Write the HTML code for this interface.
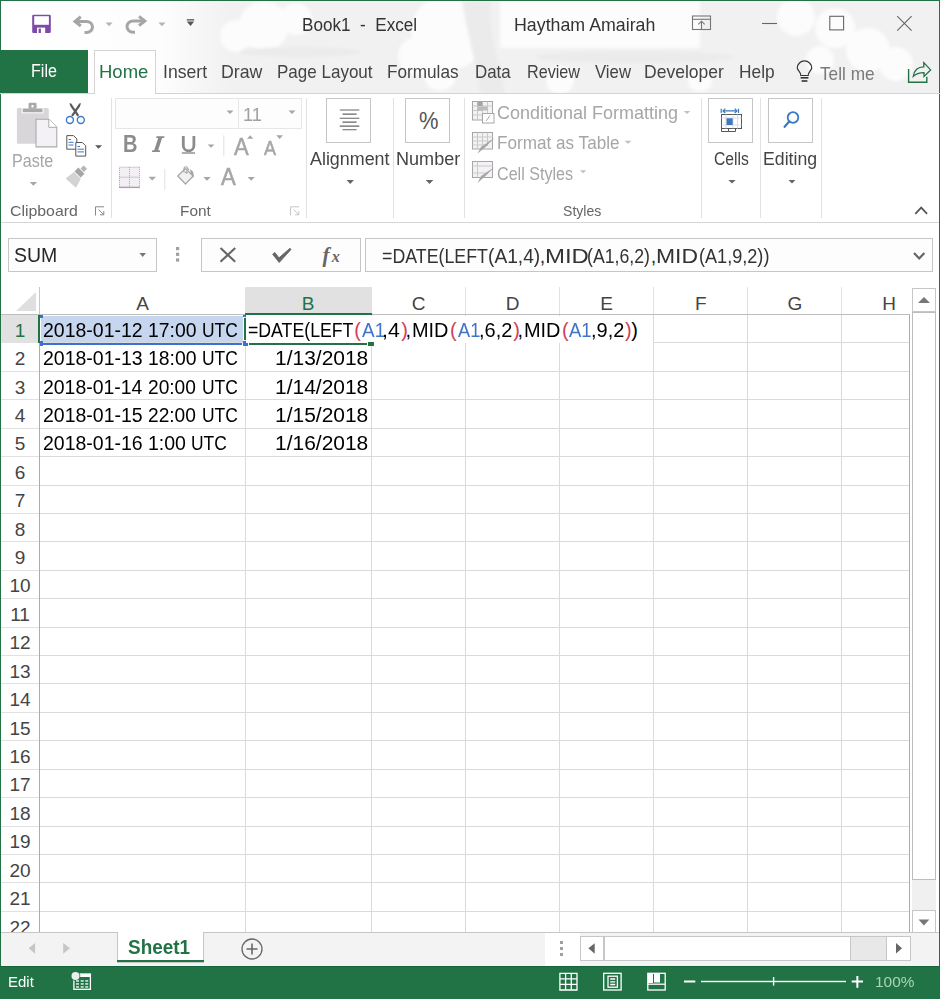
<!DOCTYPE html>
<html><head><meta charset="utf-8"><style>
html,body{margin:0;padding:0;width:940px;height:999px;overflow:hidden;background:#fff;position:relative;font-family:"Liberation Sans",sans-serif}
.t{position:absolute;white-space:pre;line-height:1;transform-origin:left top}
svg{overflow:visible}
</style></head><body>
<div style="position:absolute;left:0px;top:0px;width:940px;height:93px;background:linear-gradient(to right,#ffffff 0px,#fdfdfd 160px,#f1f1f1 230px,#f1f1f1 940px)"></div>
<svg style="position:absolute;left:0px;top:0px;" width="940" height="93" viewBox="0 0 940 93"><defs><filter id="bl" x="-20%" y="-20%" width="140%" height="140%"><feGaussianBlur stdDeviation="1.5"/></filter></defs>
<g fill="#fcfcfc" filter="url(#bl)">
<circle cx="264" cy="26" r="25"/><circle cx="296" cy="19" r="16"/><circle cx="236" cy="36" r="16"/>
<circle cx="449" cy="32" r="38"/><circle cx="417" cy="56" r="19"/><circle cx="440" cy="75" r="16"/>
<rect x="500" y="0" width="200" height="48"/><circle cx="560" cy="80" r="14"/><circle cx="700" cy="80" r="12"/>
<circle cx="796" cy="17" r="19"/><circle cx="835" cy="28" r="20"/><circle cx="868" cy="50" r="22"/><circle cx="896" cy="64" r="17"/><circle cx="820" cy="60" r="14"/>
</g>
<g fill="#ebebeb" filter="url(#bl)">
<ellipse cx="300" cy="52" rx="60" ry="5"/><path d="M462 0 H492 C486 30 500 60 505 93 H480 C476 60 466 30 462 0 Z"/>
<ellipse cx="635" cy="57" rx="100" ry="6"/>
</g></svg>
<div style="position:absolute;left:0px;top:0px;width:940px;height:1px;background:#217346"></div>
<div style="position:absolute;left:0px;top:0px;width:1px;height:999px;background:#217346"></div>
<div style="position:absolute;left:939px;top:0px;width:1px;height:999px;background:#217346"></div>
<div class="t" style="left:301.96px;top:16.00px;font-size:18.02px;color:#333;font-weight:normal;transform:scaleX(0.9496);">Book1  -  Excel</div>
<div class="t" style="left:513.97px;top:16.00px;font-size:18.02px;color:#333;font-weight:normal;transform:scaleX(0.9875);">Haytham Amairah</div>
<div style="position:absolute;left:0px;top:50px;width:88px;height:43px;background:#217346"></div>
<div class="t" style="left:30.87px;top:62.00px;font-size:18.02px;color:#fff;font-weight:normal;transform:scaleX(0.8954);">File</div>
<div style="position:absolute;left:94px;top:50px;width:62px;height:44px;background:#fff;border:1px solid #d4d4d4;border-bottom:none;box-sizing:border-box"></div>
<div style="position:absolute;left:0px;top:93px;width:940px;height:1px;background:#d4d4d4"></div>
<div style="position:absolute;left:95px;top:93px;width:60px;height:1px;background:#fff"></div>
<div class="t" style="left:99.40px;top:63.00px;font-size:18.60px;color:#217346;font-weight:normal;transform:scaleX(0.9945);">Home</div>
<div class="t" style="left:162.95px;top:63.00px;font-size:18.60px;color:#444;font-weight:normal;transform:scaleX(0.9468);">Insert</div>
<div class="t" style="left:220.68px;top:63.00px;font-size:18.60px;color:#444;font-weight:normal;transform:scaleX(0.9551);">Draw</div>
<div class="t" style="left:277.39px;top:63.00px;font-size:18.60px;color:#444;font-weight:normal;transform:scaleX(0.9152);">Page Layout</div>
<div class="t" style="left:387.25px;top:63.00px;font-size:18.60px;color:#444;font-weight:normal;transform:scaleX(0.9234);">Formulas</div>
<div class="t" style="left:474.85px;top:63.00px;font-size:18.60px;color:#444;font-weight:normal;transform:scaleX(0.9093);">Data</div>
<div class="t" style="left:526.86px;top:63.00px;font-size:18.60px;color:#444;font-weight:normal;transform:scaleX(0.8702);">Review</div>
<div class="t" style="left:594.50px;top:63.00px;font-size:18.60px;color:#444;font-weight:normal;transform:scaleX(0.9004);">View</div>
<div class="t" style="left:644.43px;top:63.00px;font-size:18.60px;color:#444;font-weight:normal;transform:scaleX(0.9420);">Developer</div>
<div class="t" style="left:738.64px;top:63.00px;font-size:18.60px;color:#444;font-weight:normal;transform:scaleX(0.9309);">Help</div>
<div class="t" style="left:820.40px;top:65.00px;font-size:18.60px;color:#7a7a7a;font-weight:normal;transform:scaleX(0.9266);">Tell me</div>
<div style="position:absolute;left:1px;top:94px;width:938px;height:128px;background:#fff"></div>
<div style="position:absolute;left:1px;top:222px;width:938px;height:1px;background:#d6d6d6"></div>
<div style="position:absolute;left:111px;top:98px;width:1px;height:120px;background:#e1e1e1"></div>
<div style="position:absolute;left:306px;top:98px;width:1px;height:120px;background:#e1e1e1"></div>
<div style="position:absolute;left:393px;top:98px;width:1px;height:120px;background:#e1e1e1"></div>
<div style="position:absolute;left:464px;top:98px;width:1px;height:120px;background:#e1e1e1"></div>
<div style="position:absolute;left:701px;top:98px;width:1px;height:120px;background:#e1e1e1"></div>
<div style="position:absolute;left:760px;top:98px;width:1px;height:120px;background:#e1e1e1"></div>
<div style="position:absolute;left:821px;top:98px;width:1px;height:120px;background:#e1e1e1"></div>
<div class="t" style="left:12.35px;top:153.00px;font-size:17.44px;color:#a6a6a6;font-weight:normal;transform:scaleX(0.9247);">Paste</div>
<div class="t" style="left:10.48px;top:204.00px;font-size:14.97px;color:#666;font-weight:normal;transform:scaleX(1.0581);">Clipboard</div>
<div class="t" style="left:179.92px;top:204.00px;font-size:14.97px;color:#666;font-weight:normal;transform:scaleX(1.0283);">Font</div>
<div class="t" style="left:310.00px;top:150.00px;font-size:18.75px;color:#444;font-weight:normal;transform:scaleX(0.9535);">Alignment</div>
<div class="t" style="left:396.35px;top:150.00px;font-size:18.75px;color:#444;font-weight:normal;transform:scaleX(0.9633);">Number</div>
<div class="t" style="left:496.84px;top:104.00px;font-size:18.31px;color:#a6a6a6;font-weight:normal;transform:scaleX(0.9833);">Conditional Formatting</div>
<div class="t" style="left:496.69px;top:134.00px;font-size:18.02px;color:#a6a6a6;font-weight:normal;transform:scaleX(0.9511);">Format as Table</div>
<div class="t" style="left:497.09px;top:165.00px;font-size:18.02px;color:#a6a6a6;font-weight:normal;transform:scaleX(0.8947);">Cell Styles</div>
<div class="t" style="left:562.87px;top:204.00px;font-size:14.97px;color:#666;font-weight:normal;transform:scaleX(0.9417);">Styles</div>
<div class="t" style="left:713.95px;top:150.00px;font-size:18.75px;color:#444;font-weight:normal;transform:scaleX(0.8361);">Cells</div>
<div class="t" style="left:763.27px;top:150.00px;font-size:18.75px;color:#444;font-weight:normal;transform:scaleX(0.9438);">Editing</div>
<div style="position:absolute;left:115px;top:98px;width:124px;height:31px;border:1px solid #e6e6e6;box-sizing:border-box;background:#fdfdfd"></div>
<div style="position:absolute;left:238px;top:98px;width:64px;height:31px;border:1px solid #e6e6e6;box-sizing:border-box;background:#fdfdfd"></div>
<div class="t" style="left:243.36px;top:106.00px;font-size:18.17px;color:#a0a0a0;font-weight:normal;transform:scaleX(1.0068);">11</div>
<div style="position:absolute;left:326px;top:98px;width:45px;height:45px;border:1px solid #c6c6c6;box-sizing:border-box"></div>
<div style="position:absolute;left:405px;top:98px;width:45px;height:45px;border:1px solid #c6c6c6;box-sizing:border-box"></div>
<div style="position:absolute;left:708px;top:98px;width:45px;height:45px;border:1px solid #c6c6c6;box-sizing:border-box"></div>
<div style="position:absolute;left:768px;top:98px;width:45px;height:45px;border:1px solid #c6c6c6;box-sizing:border-box"></div>
<div style="position:absolute;left:8px;top:238px;width:149px;height:34px;border:1px solid #c6c6c6;box-sizing:border-box;background:#fdfdfd"></div>
<div class="t" style="left:14.20px;top:246.00px;font-size:19.77px;color:#262626;font-weight:normal;transform:scaleX(0.9844);">SUM</div>
<div style="position:absolute;left:201px;top:238px;width:160px;height:34px;border:1px solid #c6c6c6;box-sizing:border-box;background:#fdfdfd"></div>
<div style="position:absolute;left:365px;top:238px;width:568px;height:34px;border:1px solid #c6c6c6;box-sizing:border-box;background:#fdfdfd"></div>
<div class="t" style="left:381.89px;top:247.00px;font-size:19.77px;color:#333;font-weight:normal;transform:scaleX(0.8997);">=DATE(LEFT</div>
<div class="t" style="left:487.70px;top:247.00px;font-size:19.77px;color:#333;font-weight:normal;transform:scaleX(0.9708);">(A1,4)</div>
<div class="t" style="left:539.85px;top:247.00px;font-size:19.77px;color:#333;font-weight:normal;transform:scaleX(1.0000);">,</div>
<div class="t" style="left:544.81px;top:247.00px;font-size:19.77px;color:#333;font-weight:normal;transform:scaleX(1.2114);">MID</div>
<div class="t" style="left:587.36px;top:247.00px;font-size:19.77px;color:#333;font-weight:normal;transform:scaleX(0.8956);">(A1,6,2)</div>
<div class="t" style="left:650.75px;top:247.00px;font-size:19.77px;color:#333;font-weight:normal;transform:scaleX(1.0000);">,</div>
<div class="t" style="left:656.30px;top:247.00px;font-size:19.77px;color:#333;font-weight:normal;transform:scaleX(1.1604);">MID</div>
<div class="t" style="left:698.88px;top:247.00px;font-size:19.77px;color:#333;font-weight:normal;transform:scaleX(0.9157);">(A1,9,2))</div>
<div style="position:absolute;left:1px;top:287px;width:909px;height:645.5px;background:#fff"></div>
<div style="position:absolute;left:40px;top:342.42px;width:870px;height:1px;background:#dadada"></div>
<div style="position:absolute;left:1px;top:342.42px;width:39px;height:1px;background:#e1e1e1"></div>
<div style="position:absolute;left:40px;top:370.84px;width:870px;height:1px;background:#dadada"></div>
<div style="position:absolute;left:1px;top:370.84px;width:39px;height:1px;background:#e1e1e1"></div>
<div style="position:absolute;left:40px;top:399.26px;width:870px;height:1px;background:#dadada"></div>
<div style="position:absolute;left:1px;top:399.26px;width:39px;height:1px;background:#e1e1e1"></div>
<div style="position:absolute;left:40px;top:427.68px;width:870px;height:1px;background:#dadada"></div>
<div style="position:absolute;left:1px;top:427.68px;width:39px;height:1px;background:#e1e1e1"></div>
<div style="position:absolute;left:40px;top:456.10px;width:870px;height:1px;background:#dadada"></div>
<div style="position:absolute;left:1px;top:456.10px;width:39px;height:1px;background:#e1e1e1"></div>
<div style="position:absolute;left:40px;top:484.52px;width:870px;height:1px;background:#dadada"></div>
<div style="position:absolute;left:1px;top:484.52px;width:39px;height:1px;background:#e1e1e1"></div>
<div style="position:absolute;left:40px;top:512.94px;width:870px;height:1px;background:#dadada"></div>
<div style="position:absolute;left:1px;top:512.94px;width:39px;height:1px;background:#e1e1e1"></div>
<div style="position:absolute;left:40px;top:541.36px;width:870px;height:1px;background:#dadada"></div>
<div style="position:absolute;left:1px;top:541.36px;width:39px;height:1px;background:#e1e1e1"></div>
<div style="position:absolute;left:40px;top:569.78px;width:870px;height:1px;background:#dadada"></div>
<div style="position:absolute;left:1px;top:569.78px;width:39px;height:1px;background:#e1e1e1"></div>
<div style="position:absolute;left:40px;top:598.20px;width:870px;height:1px;background:#dadada"></div>
<div style="position:absolute;left:1px;top:598.20px;width:39px;height:1px;background:#e1e1e1"></div>
<div style="position:absolute;left:40px;top:626.62px;width:870px;height:1px;background:#dadada"></div>
<div style="position:absolute;left:1px;top:626.62px;width:39px;height:1px;background:#e1e1e1"></div>
<div style="position:absolute;left:40px;top:655.04px;width:870px;height:1px;background:#dadada"></div>
<div style="position:absolute;left:1px;top:655.04px;width:39px;height:1px;background:#e1e1e1"></div>
<div style="position:absolute;left:40px;top:683.46px;width:870px;height:1px;background:#dadada"></div>
<div style="position:absolute;left:1px;top:683.46px;width:39px;height:1px;background:#e1e1e1"></div>
<div style="position:absolute;left:40px;top:711.88px;width:870px;height:1px;background:#dadada"></div>
<div style="position:absolute;left:1px;top:711.88px;width:39px;height:1px;background:#e1e1e1"></div>
<div style="position:absolute;left:40px;top:740.30px;width:870px;height:1px;background:#dadada"></div>
<div style="position:absolute;left:1px;top:740.30px;width:39px;height:1px;background:#e1e1e1"></div>
<div style="position:absolute;left:40px;top:768.72px;width:870px;height:1px;background:#dadada"></div>
<div style="position:absolute;left:1px;top:768.72px;width:39px;height:1px;background:#e1e1e1"></div>
<div style="position:absolute;left:40px;top:797.14px;width:870px;height:1px;background:#dadada"></div>
<div style="position:absolute;left:1px;top:797.14px;width:39px;height:1px;background:#e1e1e1"></div>
<div style="position:absolute;left:40px;top:825.56px;width:870px;height:1px;background:#dadada"></div>
<div style="position:absolute;left:1px;top:825.56px;width:39px;height:1px;background:#e1e1e1"></div>
<div style="position:absolute;left:40px;top:853.98px;width:870px;height:1px;background:#dadada"></div>
<div style="position:absolute;left:1px;top:853.98px;width:39px;height:1px;background:#e1e1e1"></div>
<div style="position:absolute;left:40px;top:882.40px;width:870px;height:1px;background:#dadada"></div>
<div style="position:absolute;left:1px;top:882.40px;width:39px;height:1px;background:#e1e1e1"></div>
<div style="position:absolute;left:40px;top:910.82px;width:870px;height:1px;background:#dadada"></div>
<div style="position:absolute;left:1px;top:910.82px;width:39px;height:1px;background:#e1e1e1"></div>
<div style="position:absolute;left:40px;top:939.24px;width:870px;height:1px;background:#dadada"></div>
<div style="position:absolute;left:1px;top:939.24px;width:39px;height:1px;background:#e1e1e1"></div>
<div style="position:absolute;left:244.50px;top:314.5px;width:1px;height:618.0px;background:#dadada"></div>
<div style="position:absolute;left:244.50px;top:287px;width:1px;height:28px;background:#e1e1e1"></div>
<div style="position:absolute;left:371.00px;top:314.5px;width:1px;height:618.0px;background:#dadada"></div>
<div style="position:absolute;left:371.00px;top:287px;width:1px;height:28px;background:#e1e1e1"></div>
<div style="position:absolute;left:465.00px;top:314.5px;width:1px;height:618.0px;background:#dadada"></div>
<div style="position:absolute;left:465.00px;top:287px;width:1px;height:28px;background:#e1e1e1"></div>
<div style="position:absolute;left:559.00px;top:314.5px;width:1px;height:618.0px;background:#dadada"></div>
<div style="position:absolute;left:559.00px;top:287px;width:1px;height:28px;background:#e1e1e1"></div>
<div style="position:absolute;left:653.20px;top:314.5px;width:1px;height:618.0px;background:#dadada"></div>
<div style="position:absolute;left:653.20px;top:287px;width:1px;height:28px;background:#e1e1e1"></div>
<div style="position:absolute;left:747.30px;top:314.5px;width:1px;height:618.0px;background:#dadada"></div>
<div style="position:absolute;left:747.30px;top:287px;width:1px;height:28px;background:#e1e1e1"></div>
<div style="position:absolute;left:841.40px;top:314.5px;width:1px;height:618.0px;background:#dadada"></div>
<div style="position:absolute;left:841.40px;top:287px;width:1px;height:28px;background:#e1e1e1"></div>
<div style="position:absolute;left:909.50px;top:314.5px;width:1px;height:618.0px;background:#dadada"></div>
<div style="position:absolute;left:909.50px;top:287px;width:1px;height:28px;background:#e1e1e1"></div>
<div style="position:absolute;left:1px;top:314px;width:909px;height:1px;background:#bdbdbd"></div>
<div style="position:absolute;left:39px;top:287px;width:1px;height:27px;background:#c8c8c8"></div>
<div style="position:absolute;left:39px;top:314px;width:1px;height:618.5px;background:#ababab"></div>
<div style="position:absolute;left:245px;top:287px;width:126.5px;height:27.5px;background:#e1e1e1"></div>
<div style="position:absolute;left:245px;top:313px;width:126.5px;height:2px;background:#217346"></div>
<div style="position:absolute;left:1px;top:315px;width:38px;height:28.4px;background:#e1e1e1"></div>
<div style="position:absolute;left:38px;top:315px;width:2px;height:28.4px;background:#217346"></div>
<svg style="position:absolute;left:16px;top:292px;" width="21" height="20" viewBox="0 0 21 20"><polygon points="20,0 20,19 0,19" fill="#dfdfdf"/></svg>
<div class="t" style="left:122.5px;width:40px;text-align:center;top:294px;font-size:19px;color:#444">A</div>
<div class="t" style="left:288.2px;width:40px;text-align:center;top:294px;font-size:19px;color:#217346">B</div>
<div class="t" style="left:398.5px;width:40px;text-align:center;top:294px;font-size:19px;color:#444">C</div>
<div class="t" style="left:492.5px;width:40px;text-align:center;top:294px;font-size:19px;color:#444">D</div>
<div class="t" style="left:586.6px;width:40px;text-align:center;top:294px;font-size:19px;color:#444">E</div>
<div class="t" style="left:680.8px;width:40px;text-align:center;top:294px;font-size:19px;color:#444">F</div>
<div class="t" style="left:774.8px;width:40px;text-align:center;top:294px;font-size:19px;color:#444">G</div>
<div class="t" style="left:869.0px;width:40px;text-align:center;top:294px;font-size:19px;color:#444">H</div>
<div class="t" style="left:1px;width:38px;text-align:center;top:321px;font-size:19px;color:#217346">1</div>
<div class="t" style="left:1px;width:38px;text-align:center;top:349px;font-size:19px;color:#444">2</div>
<div class="t" style="left:1px;width:38px;text-align:center;top:378px;font-size:19px;color:#444">3</div>
<div class="t" style="left:1px;width:38px;text-align:center;top:406px;font-size:19px;color:#444">4</div>
<div class="t" style="left:1px;width:38px;text-align:center;top:434px;font-size:19px;color:#444">5</div>
<div class="t" style="left:1px;width:38px;text-align:center;top:463px;font-size:19px;color:#444">6</div>
<div class="t" style="left:1px;width:38px;text-align:center;top:491px;font-size:19px;color:#444">7</div>
<div class="t" style="left:1px;width:38px;text-align:center;top:520px;font-size:19px;color:#444">8</div>
<div class="t" style="left:1px;width:38px;text-align:center;top:548px;font-size:19px;color:#444">9</div>
<div class="t" style="left:1px;width:38px;text-align:center;top:576px;font-size:19px;color:#444">10</div>
<div class="t" style="left:1px;width:38px;text-align:center;top:605px;font-size:19px;color:#444">11</div>
<div class="t" style="left:1px;width:38px;text-align:center;top:633px;font-size:19px;color:#444">12</div>
<div class="t" style="left:1px;width:38px;text-align:center;top:662px;font-size:19px;color:#444">13</div>
<div class="t" style="left:1px;width:38px;text-align:center;top:690px;font-size:19px;color:#444">14</div>
<div class="t" style="left:1px;width:38px;text-align:center;top:719px;font-size:19px;color:#444">15</div>
<div class="t" style="left:1px;width:38px;text-align:center;top:747px;font-size:19px;color:#444">16</div>
<div class="t" style="left:1px;width:38px;text-align:center;top:775px;font-size:19px;color:#444">17</div>
<div class="t" style="left:1px;width:38px;text-align:center;top:804px;font-size:19px;color:#444">18</div>
<div class="t" style="left:1px;width:38px;text-align:center;top:832px;font-size:19px;color:#444">19</div>
<div class="t" style="left:1px;width:38px;text-align:center;top:861px;font-size:19px;color:#444">20</div>
<div class="t" style="left:1px;width:38px;text-align:center;top:889px;font-size:19px;color:#444">21</div>
<div class="t" style="left:1px;width:38px;text-align:center;top:918px;font-size:19px;color:#444">22</div>
<div style="position:absolute;left:41px;top:316px;width:202px;height:26px;background:#c6d6ee"></div>
<div style="position:absolute;left:42px;top:343px;width:200px;height:2px;background:#3a72d2"></div>
<div style="position:absolute;left:40px;top:315px;width:3px;height:3px;background:#3a72d2"></div>
<div style="position:absolute;left:243px;top:315px;width:3px;height:2px;background:#3a72d2"></div>
<div style="position:absolute;left:40px;top:341px;width:3px;height:5px;background:#3a72d2"></div>
<div style="position:absolute;left:243px;top:341px;width:5px;height:5px;background:#3a72d2"></div>
<div class="t" style="left:42.68px;top:321.00px;font-size:19.91px;color:#000;font-weight:normal;transform:scaleX(0.9788);">2018-01-12</div>
<div class="t" style="left:148.10px;top:321.00px;font-size:19.91px;color:#000;font-weight:normal;transform:scaleX(0.9724);">17:00</div>
<div class="t" style="left:201.74px;top:321.00px;font-size:19.91px;color:#000;font-weight:normal;transform:scaleX(0.8764);">UTC</div>
<div class="t" style="left:42.68px;top:349.00px;font-size:19.91px;color:#000;font-weight:normal;transform:scaleX(0.9787);">2018-01-13</div>
<div class="t" style="left:148.10px;top:349.00px;font-size:19.91px;color:#000;font-weight:normal;transform:scaleX(0.9724);">18:00</div>
<div class="t" style="left:201.74px;top:349.00px;font-size:19.91px;color:#000;font-weight:normal;transform:scaleX(0.8764);">UTC</div>
<div class="t" style="left:42.68px;top:378.00px;font-size:19.91px;color:#000;font-weight:normal;transform:scaleX(0.9762);">2018-01-14</div>
<div class="t" style="left:147.87px;top:378.00px;font-size:19.91px;color:#000;font-weight:normal;transform:scaleX(0.9617);">20:00</div>
<div class="t" style="left:201.74px;top:378.00px;font-size:19.91px;color:#000;font-weight:normal;transform:scaleX(0.8764);">UTC</div>
<div class="t" style="left:42.68px;top:406.00px;font-size:19.91px;color:#000;font-weight:normal;transform:scaleX(0.9787);">2018-01-15</div>
<div class="t" style="left:147.87px;top:406.00px;font-size:19.91px;color:#000;font-weight:normal;transform:scaleX(0.9617);">22:00</div>
<div class="t" style="left:201.74px;top:406.00px;font-size:19.91px;color:#000;font-weight:normal;transform:scaleX(0.8764);">UTC</div>
<div class="t" style="left:42.68px;top:434.00px;font-size:19.91px;color:#000;font-weight:normal;transform:scaleX(0.9787);">2018-01-16</div>
<div class="t" style="left:148.09px;top:434.00px;font-size:19.91px;color:#000;font-weight:normal;transform:scaleX(0.9800);">1:00</div>
<div class="t" style="left:191.21px;top:434.00px;font-size:19.91px;color:#000;font-weight:normal;transform:scaleX(0.8750);">UTC</div>
<div class="t" style="left:275.45px;top:349.00px;font-size:19.91px;color:#000;font-weight:normal;transform:scaleX(1.0532);">1/13/2018</div>
<div class="t" style="left:275.45px;top:378.00px;font-size:19.91px;color:#000;font-weight:normal;transform:scaleX(1.0532);">1/14/2018</div>
<div class="t" style="left:275.45px;top:406.00px;font-size:19.91px;color:#000;font-weight:normal;transform:scaleX(1.0532);">1/15/2018</div>
<div class="t" style="left:275.45px;top:434.00px;font-size:19.91px;color:#000;font-weight:normal;transform:scaleX(1.0532);">1/16/2018</div>
<div style="position:absolute;left:246px;top:315.5px;width:407px;height:27.5px;background:#fff"></div>
<div style="position:absolute;left:244px;top:318px;width:2px;height:22px;background:#217346"></div>
<div style="position:absolute;left:249px;top:343px;width:118px;height:2px;background:#217346"></div>
<div style="position:absolute;left:368px;top:342px;width:6px;height:4px;background:#217346"></div>
<div class="t" style="left:248.40px;top:321.00px;font-size:19.91px;color:#000;font-weight:normal;transform:scaleX(0.8894);">=DATE(LEFT</div>
<div class="t" style="left:354.30px;top:321.00px;font-size:19.91px;color:#d0415a;font-weight:normal;transform:scaleX(1.0000);">(</div>
<div class="t" style="left:361.79px;top:321.00px;font-size:19.91px;color:#3f74c9;font-weight:normal;transform:scaleX(0.9519);">A1</div>
<div class="t" style="left:382.34px;top:321.00px;font-size:19.91px;color:#000;font-weight:normal;transform:scaleX(1.0703);">,4</div>
<div class="t" style="left:401.25px;top:321.00px;font-size:19.91px;color:#d0415a;font-weight:normal;transform:scaleX(1.0000);">)</div>
<div class="t" style="left:405.40px;top:321.00px;font-size:19.91px;color:#000;font-weight:normal;transform:scaleX(1.0000);">,</div>
<div class="t" style="left:411.82px;top:321.00px;font-size:19.91px;color:#000;font-weight:normal;transform:scaleX(1.0005);">MID</div>
<div class="t" style="left:450.10px;top:321.00px;font-size:19.91px;color:#d0415a;font-weight:normal;transform:scaleX(1.0000);">(</div>
<div class="t" style="left:458.00px;top:321.00px;font-size:19.91px;color:#3f74c9;font-weight:normal;transform:scaleX(0.9147);">A1</div>
<div class="t" style="left:478.59px;top:321.00px;font-size:19.91px;color:#000;font-weight:normal;transform:scaleX(1.0036);">,6,2</div>
<div class="t" style="left:513.20px;top:321.00px;font-size:19.91px;color:#d0415a;font-weight:normal;transform:scaleX(1.0000);">)</div>
<div class="t" style="left:517.40px;top:321.00px;font-size:19.91px;color:#000;font-weight:normal;transform:scaleX(1.0000);">,</div>
<div class="t" style="left:523.82px;top:321.00px;font-size:19.91px;color:#000;font-weight:normal;transform:scaleX(1.0005);">MID</div>
<div class="t" style="left:562.10px;top:321.00px;font-size:19.91px;color:#d0415a;font-weight:normal;transform:scaleX(1.0000);">(</div>
<div class="t" style="left:569.21px;top:321.00px;font-size:19.91px;color:#3f74c9;font-weight:normal;transform:scaleX(0.9314);">A1</div>
<div class="t" style="left:590.66px;top:321.00px;font-size:19.91px;color:#000;font-weight:normal;transform:scaleX(1.0036);">,9,2</div>
<div class="t" style="left:625.10px;top:321.00px;font-size:19.91px;color:#d0415a;font-weight:normal;transform:scaleX(1.0000);">)</div>
<div class="t" style="left:631.20px;top:321.00px;font-size:19.91px;color:#000;font-weight:normal;transform:scaleX(1.0000);">)</div>
<div style="position:absolute;left:910px;top:287px;width:29px;height:646px;background:#fff"></div>
<div style="position:absolute;left:912px;top:288px;width:24px;height:24px;border:1px solid #c6c6c6;box-sizing:border-box;background:#fff"></div>
<div style="position:absolute;left:912px;top:312px;width:24px;height:598px;background:#f0f0f0"></div>
<div style="position:absolute;left:912px;top:312px;width:24px;height:568px;background:#fff;border:1px solid #bdbdbd;box-sizing:border-box"></div>
<div style="position:absolute;left:912px;top:910px;width:24px;height:24px;border:1px solid #c6c6c6;box-sizing:border-box;background:#fff"></div>
<svg style="position:absolute;left:912px;top:288px;" width="24" height="24" viewBox="0 0 24 24"><polygon points="6,15 18,15 12,9" fill="#777"/></svg>
<svg style="position:absolute;left:912px;top:910px;" width="24" height="24" viewBox="0 0 24 24"><polygon points="6.5,9.5 17.3,9.5 11.9,15.5" fill="#777"/></svg>
<div style="position:absolute;left:909px;top:315px;width:1px;height:617px;background:#ababab"></div>
<div style="position:absolute;left:1px;top:932px;width:938px;height:34px;background:#f3f3f3"></div>
<div style="position:absolute;left:1px;top:932px;width:938px;height:1px;background:#c6c6c6"></div>
<div style="position:absolute;left:545px;top:933px;width:35px;height:33px;background:#fff"></div>
<div style="position:absolute;left:117px;top:932px;width:87px;height:31px;background:#fff;border:1px solid #c6c6c6;border-top:none;box-sizing:border-box"></div>
<div style="position:absolute;left:117px;top:960px;width:87px;height:2px;background:#217346"></div>
<div class="t" style="left:127.79px;top:938.00px;font-size:19.62px;color:#217346;font-weight:bold;transform:scaleX(0.9654);">Sheet1</div>
<svg style="position:absolute;left:0px;top:930px;" width="100" height="30" viewBox="0 0 100 30"><polygon points="28.7,18.3 35.1,12.9 35.1,23.7" fill="#c6c6c6"/><polygon points="63.2,12.9 70,18.3 63.2,23.7" fill="#c6c6c6"/></svg>
<svg style="position:absolute;left:240px;top:937px;" width="24" height="24" viewBox="0 0 24 24"><circle cx="12" cy="12" r="10" fill="none" stroke="#666" stroke-width="1.3"/><path d="M12 6.5v11M6.5 12h11" stroke="#666" stroke-width="1.6"/></svg>
<svg style="position:absolute;left:558px;top:940px;" width="8" height="18" viewBox="0 0 8 18"><rect x="2" y="1" width="3" height="3" fill="#a0a0a0"/><rect x="2" y="7" width="3" height="3" fill="#a0a0a0"/><rect x="2" y="13" width="3" height="3" fill="#a0a0a0"/></svg>
<div style="position:absolute;left:580px;top:936px;width:331px;height:25px;border:1px solid #c6c6c6;box-sizing:border-box;background:#e8e8e8"></div>
<div style="position:absolute;left:580px;top:936px;width:24px;height:25px;border:1px solid #c6c6c6;box-sizing:border-box;background:#fff"></div>
<div style="position:absolute;left:604px;top:936px;width:247px;height:25px;border:1px solid #c6c6c6;box-sizing:border-box;background:#fff"></div>
<div style="position:absolute;left:886px;top:936px;width:25px;height:25px;border:1px solid #c6c6c6;box-sizing:border-box;background:#fff"></div>
<svg style="position:absolute;left:580px;top:936px;" width="24" height="25" viewBox="0 0 24 25"><polygon points="8.4,12.3 14.7,7.3 14.7,17.7" fill="#666"/></svg>
<svg style="position:absolute;left:886px;top:936px;" width="25" height="25" viewBox="0 0 25 25"><polygon points="16,12.3 10,7 10,17.6" fill="#666"/></svg>
<div style="position:absolute;left:0px;top:966px;width:940px;height:33px;background:#217346"></div>
<div style="position:absolute;left:0px;top:966px;width:940px;height:1px;background:#12663a"></div>
<div class="t" style="left:7.69px;top:975.00px;font-size:14.97px;color:#fff;font-weight:normal;transform:scaleX(1.0004);">Edit</div>
<div class="t" style="left:875.09px;top:974.00px;font-size:15.26px;color:#a9d5b5;font-weight:normal;transform:scaleX(1.0097);">100%</div>
<svg style="position:absolute;left:0;top:0" width="940" height="999" viewBox="0 0 940 999">
<!-- save -->
<rect x="32.2" y="14.7" width="18.6" height="18.3" rx="1.2" fill="#7e4aa8"/>
<rect x="34.2" y="16.2" width="14.7" height="8.6" fill="#fff"/>
<rect x="37" y="27.6" width="8.2" height="5.4" fill="#fff"/>
<rect x="38.6" y="28.6" width="2.3" height="4.4" fill="#7e4aa8"/>
<!-- undo -->
<path d="M80.8 16.8 L75 21.4 L80.8 26" fill="none" stroke="#a6a6a6" stroke-width="3" stroke-linejoin="miter"/>
<path d="M75.5 21.4 H86.5 A6 5.5 0 0 1 86.5 32.4 H84.5" fill="none" stroke="#a6a6a6" stroke-width="3"/>
<polygon points="105.6,22.5 112.6,22.5 109.1,26.2" fill="#b4b4b4"/>
<!-- redo -->
<path d="M139 16.4 L144.8 21 L139 25.6" fill="none" stroke="#a6a6a6" stroke-width="3"/>
<path d="M144.3 21 H133 A6 5.6 0 0 0 133 32.2 H135" fill="none" stroke="#a6a6a6" stroke-width="3"/>
<polygon points="158.5,22.5 165.5,22.5 162,26.2" fill="#b4b4b4"/>
<!-- customize -->
<rect x="186.8" y="19.2" width="7.4" height="1.3" fill="#555"/>
<polygon points="186.8,21.6 194.2,21.6 190.5,26" fill="#555"/>
<!-- ribbon display options -->
<rect x="692.5" y="16" width="18" height="13.5" fill="none" stroke="#777" stroke-width="1.1"/>
<line x1="692.5" y1="19.3" x2="710.5" y2="19.3" stroke="#777" stroke-width="1.1"/>
<path d="M701.5 29.5 V21.3 M698.3 24.3 L701.5 21.2 L704.7 24.3" fill="none" stroke="#777" stroke-width="1.1"/>
<!-- minimize / maximize / close -->
<line x1="762" y1="23.5" x2="777" y2="23.5" stroke="#666" stroke-width="1.1"/>
<rect x="829.8" y="16.3" width="13.8" height="13.6" fill="none" stroke="#666" stroke-width="1.1"/>
<path d="M897.2 16.2 L911.6 30.6 M911.6 16.2 L897.2 30.6" stroke="#666" stroke-width="1.1"/>
<!-- bulb -->
<path d="M800.8 75.5 C800.8 72 797.3 70.3 797.3 67.9 A7.2 7 0 0 1 811.7 67.9 C811.7 70.3 808.2 72 808.2 75.5 Z" fill="none" stroke="#333" stroke-width="1.2"/>
<rect x="800.6" y="77" width="7.8" height="1.6" fill="#333"/>
<rect x="801.6" y="80.2" width="5.8" height="1.6" fill="#333"/>
<!-- share -->
<path d="M908.6 69 V82.2 H926.8 V76.8" fill="none" stroke="#217346" stroke-width="1.4"/>
<path d="M913.3 76.3 C914.2 70.2 918.2 66.8 923.8 66.8 V62.6 L930.6 69.9 L924 76.4 V72.6 C919.2 72.6 915.8 73.8 913.3 76.3 Z" fill="none" stroke="#217346" stroke-width="1.3" stroke-linejoin="miter"/>
<!-- clipboard -->
<rect x="16.9" y="108.1" width="31.9" height="35.6" rx="1.5" fill="#d9d6da"/>
<rect x="22.2" y="108" width="20.8" height="4.8" fill="#a9a9a9" stroke="#fff" stroke-width="1"/>
<rect x="28.6" y="102.8" width="8" height="6" rx="1.2" fill="#a9a9a9"/>
<circle cx="32.5" cy="106.3" r="1.2" fill="#fff"/>
<path d="M36 119.3 H48.8 L56.8 127.3 V146.9 H36 Z" fill="#f4f1f6" stroke="#aaa" stroke-width="1.1"/>
<path d="M48.8 119.3 V127.3 H56.8" fill="#fff" stroke="#aaa" stroke-width="1"/>
<!-- scissors -->
<path d="M69.4 103.2 L71.2 103.6 L79.2 115.3 L77.4 116.4 L70.5 106.5 Z" fill="#5a5a5a"/><path d="M81 103.2 L79.2 103.6 L71.2 115.3 L73 116.4 L79.9 106.5 Z" fill="#5a5a5a"/>
<circle cx="69.9" cy="120" r="3.5" fill="none" stroke="#3b7bc7" stroke-width="1.4"/>
<circle cx="80.8" cy="120" r="3.5" fill="none" stroke="#3b7bc7" stroke-width="1.4"/>
<!-- copy -->
<path d="M66.8 135.6 H73.5 L76.8 138.9 V149.2 H66.8 Z" fill="#fff" stroke="#555" stroke-width="1"/>
<path d="M75.8 142.5 H82.4 L85.7 145.8 V156.1 H75.8 Z" fill="#fff" stroke="#555" stroke-width="1"/>
<path d="M68.5 139.5 H71 M68.5 142.3 H73.5 M68.5 145 H73.5" stroke="#3b7bc7" stroke-width="1"/>
<path d="M77.5 146.5 H80 M77.5 149.2 H84 M77.5 151.9 H84" stroke="#3b7bc7" stroke-width="1"/>
<polygon points="95.1,145.3 102,145.3 98.5,148.8" fill="#555"/>
<!-- format painter -->
<path d="M65.5 178.5 L74 172 L80.8 178.8 L76 187.8 Z" fill="#d3d3d3"/>
<path d="M74.5 171.4 L78.3 167.6 L84.5 173.8 L80.7 177.6 Z" fill="#a6a6a6"/>
<path d="M80.5 168.5 L83.6 165.4 L87 168.8 L83.9 171.9 Z" fill="#b5b5b5"/>
<polygon points="29.7,182 37.1,182 33.4,185.8" fill="#a6a6a6"/>
<!-- dialog launchers -->
<path d="M95.5 215.5 V206.8 H104" fill="none" stroke="#888" stroke-width="1"/>
<path d="M98.5 209.5 L103.5 214.5 M100 214.8 H103.8 V211" fill="none" stroke="#888" stroke-width="1"/>
<path d="M290.5 215.5 V206.8 H299" fill="none" stroke="#c6c6c6" stroke-width="1"/>
<path d="M293.5 209.5 L298.5 214.5 M295 214.8 H298.8 V211" fill="none" stroke="#c6c6c6" stroke-width="1"/>
<!-- font dropdowns -->
<polygon points="226.5,110.5 233.5,110.5 230,114" fill="#a6a6a6"/>
<polygon points="288.5,110.5 295.5,110.5 292,114" fill="#a6a6a6"/>
<!-- U dropdown, borders, fill etc -->
<polygon points="207.6,144.4 214.5,144.4 211,147.8" fill="#a6a6a6"/>
<rect x="223.3" y="135.3" width="1" height="21" fill="#e1e1e1"/>
<polygon points="247,138.8 253.3,138.8 250.15,135.3" fill="#a6a6a6"/>
<polygon points="276.3,135.3 283,135.3 279.65,139.1" fill="#a6a6a6"/>
<!-- borders icon -->
<rect x="119.5" y="167.2" width="20" height="20" fill="#f3eff5"/>
<rect x="119.5" y="167.2" width="20" height="20" fill="none" stroke="#a6a6a6" stroke-width="1" stroke-dasharray="1,1"/>
<path d="M129.5 167.2 V187.2 M119.5 177.2 H139.5" stroke="#a6a6a6" stroke-width="1" stroke-dasharray="1,1"/>
<rect x="119" y="186.8" width="21" height="1.3" fill="#a6a6a6"/>
<polygon points="148.5,176.8 156,176.8 152.25,180.5" fill="#a6a6a6"/>
<rect x="164.3" y="168.8" width="1" height="21" fill="#e1e1e1"/>
<!-- fill bucket -->
<path d="M177.8 176 L185.5 168.5 L193.2 176 L185.5 184 Z" fill="#f3eff5" stroke="#a6a6a6" stroke-width="1.2" stroke-linejoin="round"/>
<path d="M184 172.5 V168.5 A1.8 1.8 0 0 1 187.6 168.5 L189 170" fill="none" stroke="#a6a6a6" stroke-width="1.1"/>
<circle cx="186.5" cy="172.5" r="1.2" fill="#a6a6a6"/>
<path d="M190 169.5 C193 170 194.5 174 193.5 178 C192.8 176 192 175 191 174.5" fill="#a6a6a6"/>
<polygon points="203.3,177 210.7,177 207,180.8" fill="#a6a6a6"/>
<polygon points="247.6,177 254.8,177 251.2,180.8" fill="#a6a6a6"/>
<!-- alignment lines -->
<path d="M339.8 110 H359.3 M342.5 114.1 H356.6 M339.8 118.2 H359.3 M342.5 122.1 H356.6 M339.8 126.1 H359.3 M342.5 129.8 H356.6" stroke="#666" stroke-width="1.1"/>
<polygon points="346.6,180 353.9,180 350.25,184" fill="#666"/>
<polygon points="425.7,180 433.3,180 429.5,184" fill="#666"/>
<polygon points="728.4,180 735.7,180 732,183.5" fill="#666"/>
<polygon points="788.5,180 795.4,180 792,183.5" fill="#666"/>
<!-- percent -->
<text x="419" y="129.4" font-family="Liberation Sans" font-size="24" fill="#555" textLength="19.5" lengthAdjust="spacingAndGlyphs">%</text>
<!-- cf / table / styles icons -->
<g stroke="#a6a6a6" stroke-width="1" fill="#f5f2f6">
<rect x="472.5" y="101.5" width="20" height="18.5"/>
<rect x="482.5" y="113.5" width="11.5" height="9.5" fill="#fff"/>
<rect x="472.5" y="132.5" width="20" height="16.5"/>
<rect x="472.5" y="161.5" width="20" height="16"/>
</g>
<g stroke="#c9c9c9" stroke-width="1">
<path d="M472.5 106 H492.5 M472.5 110.5 H482 M472.5 115 H482 M477.5 101.5 V120 M482.5 101.5 V113 M487.5 101.5 V113"/>
<path d="M472.5 137 H492.5 M472.5 141 H492.5 M472.5 145 H488 M477.5 132.5 V149 M482.5 132.5 V149 M487.5 132.5 V146"/>
<path d="M472.5 166 H492.5 M472.5 173 H488 M477.5 161.5 V177.5"/>
</g>
<rect x="477.5" y="102" width="5" height="4" fill="#a6a6a6"/>
<rect x="477.5" y="106.5" width="10" height="4" fill="#bbb"/>
<path d="M486 121 L490 115.5" stroke="#a6a6a6" stroke-width="1"/>
<path d="M494.5 137.8 L485 147.5 L477.5 153.5 L481 147 Z" fill="#a6a6a6"/>
<path d="M494.5 167 L485 176.5 L477.5 183 L481 176 Z" fill="#a6a6a6"/>
<polygon points="683.8,111 690.2,111 687,114" fill="#c0c0c0"/>
<polygon points="624.6,140.8 631.5,140.8 628,143.8" fill="#c0c0c0"/>
<polygon points="580,170.3 586.3,170.3 583.15,173.3" fill="#c0c0c0"/>
<!-- cells icon -->
<path d="M721.2 108.7 V113 M738.5 108.7 V113" stroke="#3a78c4" stroke-width="1.2"/>
<path d="M723 110.9 H737 M725.3 108.6 L723 110.9 L725.3 113.2 M734.7 108.6 L737 110.9 L734.7 113.2" fill="none" stroke="#3a78c4" stroke-width="1.2"/>
<rect x="721.5" y="114.5" width="20" height="14" fill="#fff" stroke="#555" stroke-width="1"/>
<path d="M721.5 118 H741.5 M721.5 125 H741.5 M726 114.5 V128.5 M733 114.5 V128.5 M737.5 114.5 V128.5" stroke="#ddd" stroke-width="1"/>
<rect x="726.5" y="118.3" width="6.2" height="6.7" fill="#3a78c4"/>
<path d="M721.5 128.5 V131.5 H728.5 V128.5 M728.5 131.5 H735.5 V128.5" fill="none" stroke="#555" stroke-width="1"/>
<!-- magnifier -->
<circle cx="793" cy="117.5" r="5.3" fill="none" stroke="#3a78c4" stroke-width="1.8"/>
<path d="M789.2 121.5 L784.6 126.8" stroke="#3a78c4" stroke-width="2.2" stroke-linecap="round"/>
<!-- collapse ribbon -->
<path d="M915.3 213.8 L921.2 207.6 L927.1 213.8" fill="none" stroke="#555" stroke-width="1.7"/>
<!-- formula bar -->
<polygon points="139.4,253 146,253 142.7,256.9" fill="#777"/>
<rect x="176" y="247" width="3.2" height="3.2" fill="#a0a0a0"/>
<rect x="176" y="252.7" width="3.2" height="3.2" fill="#a0a0a0"/>
<rect x="176" y="258.4" width="3.2" height="3.2" fill="#a0a0a0"/>
<path d="M220.5 248 L235.2 261.8 M235.2 248 L220.5 261.8" stroke="#666" stroke-width="2.1"/>
<path d="M272.6 254.2 L279.2 262.6 L291 249.5 L290 248.2 L279 257.8 L274.8 252.4 Z" fill="#666" stroke="#666" stroke-width="0.8" stroke-linejoin="round"/>
<text x="322.5" y="261.5" font-family="Liberation Serif" font-style="italic" font-weight="bold" font-size="21" fill="#666">f</text>
<text x="331.8" y="262" font-family="Liberation Serif" font-style="italic" font-weight="bold" font-size="16" fill="#666">x</text>
<path d="M914 253 L919.2 258.4 L924.4 253" fill="none" stroke="#666" stroke-width="2.2"/>
<!-- status bar icons -->
<g fill="none" stroke="#fff" stroke-width="1.3">
<rect x="73.9" y="974" width="16.5" height="15.3"/>
<path d="M559.9 973.3 H577 V990 H559.9 Z M565.6 973.3 V990 M571.3 973.3 V990 M559.9 978.9 H577 M559.9 984.4 H577"/>
<rect x="603.7" y="973.3" width="17.4" height="16.7"/>
<rect x="608" y="976.2" width="9.4" height="11"/>
<path d="M610.2 979 H615.2 M610.2 981.8 H615.2 M610.2 984.5 H615.2"/>
<rect x="647.8" y="973.3" width="17.4" height="16.7"/>
<path d="M647.8 984.2 H665.2"/>
</g>
<rect x="648" y="973" width="5" height="10" fill="#fff"/>
<rect x="654" y="973" width="6" height="9.5" fill="#fff"/>
<rect x="74.5" y="974.2" width="16" height="2.8" fill="#fff"/>
<circle cx="75.5" cy="976" r="4.8" fill="#217346"/>
<circle cx="75.5" cy="976" r="4" fill="#e8eee9"/>
<g fill="#fff"><rect x="76" y="980.3" width="3" height="1.3"/><rect x="80.7" y="980.3" width="3" height="1.3"/><rect x="85.2" y="980.3" width="3" height="1.3"/>
<rect x="76" y="983.3" width="3" height="1.3"/><rect x="80.7" y="983.3" width="3" height="1.3"/><rect x="85.2" y="983.3" width="3" height="1.3"/>
<rect x="76" y="986.3" width="3" height="1.3"/><rect x="80.7" y="986.3" width="3" height="1.3"/><rect x="85.2" y="986.3" width="3" height="1.3"/></g>
<rect x="684" y="980.5" width="11.3" height="2" fill="#fff"/>
<rect x="701" y="980.8" width="145" height="1.4" fill="#fff"/>
<rect x="772.9" y="977" width="1.4" height="8.6" fill="#fff"/>
<path d="M851.7 981.6 H863 M857.35 976 V987.8" stroke="#fff" stroke-width="2"/>
</svg>
<div class="t" style="left:122.57px;top:133.00px;font-size:23.11px;color:#8c8c8c;font-weight:bold;transform:scaleX(0.8670);">B</div>
<svg style="position:absolute;left:0;top:0" width="940" height="300" viewBox="0 0 940 300"><path d="M156.5 136.2 H164.6 L164.2 137.8 L162 138.3 L158.2 150 L160.2 150.4 L159.8 151.9 H151.8 L152.2 150.4 L154.3 150 L158.1 138.3 L156.1 137.8 Z" fill="#8c8c8c"/><path d="M183.3 136 V145.5 A5.3 5.3 0 0 0 193.9 145.5 V136" fill="none" stroke="#8c8c8c" stroke-width="2.8"/><rect x="181.8" y="152.3" width="13.2" height="1.4" fill="#8c8c8c"/></svg>
<div class="t" style="left:234.08px;top:135.00px;font-size:24.42px;color:#a6a6a6;font-weight:normal;transform:scaleX(0.9012);-webkit-text-stroke:0.6px #a6a6a6">A</div>
<div class="t" style="left:264.38px;top:138.00px;font-size:20.20px;color:#a6a6a6;font-weight:normal;transform:scaleX(0.8919);-webkit-text-stroke:0.5px #a6a6a6">A</div>
<div class="t" style="left:221.49px;top:165.00px;font-size:24.42px;color:#a6a6a6;font-weight:normal;transform:scaleX(0.9012);-webkit-text-stroke:0.6px #a6a6a6">A</div>
</body></html>
